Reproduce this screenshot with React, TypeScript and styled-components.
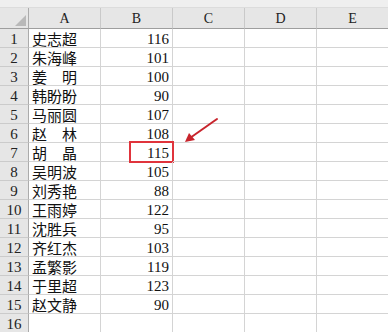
import React from "react";
import styled, { createGlobalStyle } from "styled-components";

const Global = createGlobalStyle`
  html, body { margin: 0; padding: 0; background: #ffffff; }
  body { width: 388px; height: 332px; overflow: hidden; }
`;

const Page = styled.div`
  position: relative;
  width: 388px;
  height: 332px;
  overflow: hidden;
  background: #fff;
  display: flex;
  flex-direction: column;
`;

const TopStrip = styled.div`
  height: 7px;
  flex: none;
  background: #efefef;
  border-bottom: 1px solid #dcdcdc;
`;

const Grid = styled.div`
  display: grid;
  grid-template-columns: 29px repeat(5, 72px);
  grid-auto-rows: 19px;
  grid-template-rows: 21px;
  width: 389px;
`;

const Corner = styled.div`
  position: relative;
  background: #e6e6e6;
  border-right: 1px solid #ababab;
  border-bottom: 1px solid #9e9e9e;
  &::after {
    content: "";
    position: absolute;
    right: 2px;
    bottom: 2px;
    width: 0;
    height: 0;
    border-left: 11px solid transparent;
    border-bottom: 11px solid #b9b9b9;
  }
`;

const ColHead = styled.div`
  background: #e6e6e6;
  border-right: 1px solid #c9c9c9;
  border-bottom: 1px solid #9e9e9e;
  display: flex;
  align-items: flex-end;
  justify-content: center;
  padding-bottom: 1px;
  box-sizing: border-box;
  font-family: "Liberation Serif", serif;
  font-size: 14px;
  color: #222;
`;

const RowHead = styled.div`
  background: #e6e6e6;
  border-right: 1px solid #ababab;
  border-bottom: 1px solid #cbcbcb;
  display: flex;
  align-items: center;
  justify-content: center;
  padding-top: 2px;
  box-sizing: border-box;
  font-family: "Liberation Serif", serif;
  font-size: 15px;
  color: #222;
`;

const Cell = styled.div<{ $num?: boolean }>`
  position: relative;
  border-right: 1px solid #d4d4d4;
  border-bottom: 1px solid #d4d4d4;
  box-sizing: border-box;
  display: flex;
  align-items: center;
  justify-content: ${(p) => (p.$num ? "flex-end" : "flex-start")};
  padding: ${(p) => (p.$num ? "2px 3px 0 0" : "0 0 0 3px")};
  font-family: ${(p) =>
    p.$num
      ? `"Liberation Serif", serif`
      : `"Noto Sans CJK SC", "Noto Sans", sans-serif`};
  font-size: 15px;
  color: #111;
  white-space: pre;
  line-height: 1;
`;

const Highlight = styled.div`
  position: absolute;
  left: 28px;
  right: -2px;
  top: -2px;
  bottom: -2px;
  border: 2px solid #e0343c;
  box-sizing: border-box;
  pointer-events: none;
`;

const Arrow = styled.svg`
  position: absolute;
  left: 180px;
  top: 114px;
  width: 42px;
  height: 34px;
  overflow: visible;
`;

const data: [string, number][] = [
  ["史志超", 116],
  ["朱海峰", 101],
  ["姜　明", 100],
  ["韩盼盼", 90],
  ["马丽圆", 107],
  ["赵　林", 108],
  ["胡　晶", 115],
  ["吴明波", 105],
  ["刘秀艳", 88],
  ["王雨婷", 122],
  ["沈胜兵", 95],
  ["齐红杰", 103],
  ["孟繁影", 119],
  ["于里超", 123],
  ["赵文静", 90],
];

const cols = ["A", "B", "C", "D", "E"];

export default function App() {
  const rows = [...data.map((d) => d as [string, number] | null), null];
  return (
    <Page>
      <Global />
      <TopStrip />
      <Grid>
        <Corner />
        {cols.map((c) => (
          <ColHead key={c}>{c}</ColHead>
        ))}
        {rows.map((r, i) => (
          <React.Fragment key={i}>
            <RowHead>{i + 1}</RowHead>
            <Cell>{r ? r[0] : ""}</Cell>
            <Cell $num>
              {r ? r[1] : ""}
              {i === 6 && <Highlight />}
            </Cell>
            <Cell />
            <Cell />
            <Cell />
          </React.Fragment>
        ))}
      </Grid>
      <Arrow viewBox="0 0 42 34">
        <line x1="37" y1="5" x2="10" y2="24" stroke="#c8242c" strokeWidth="2" strokeLinecap="round" />
        <polygon points="5,28 9,19 15,26" fill="#c8242c" />
      </Arrow>
    </Page>
  );
}
